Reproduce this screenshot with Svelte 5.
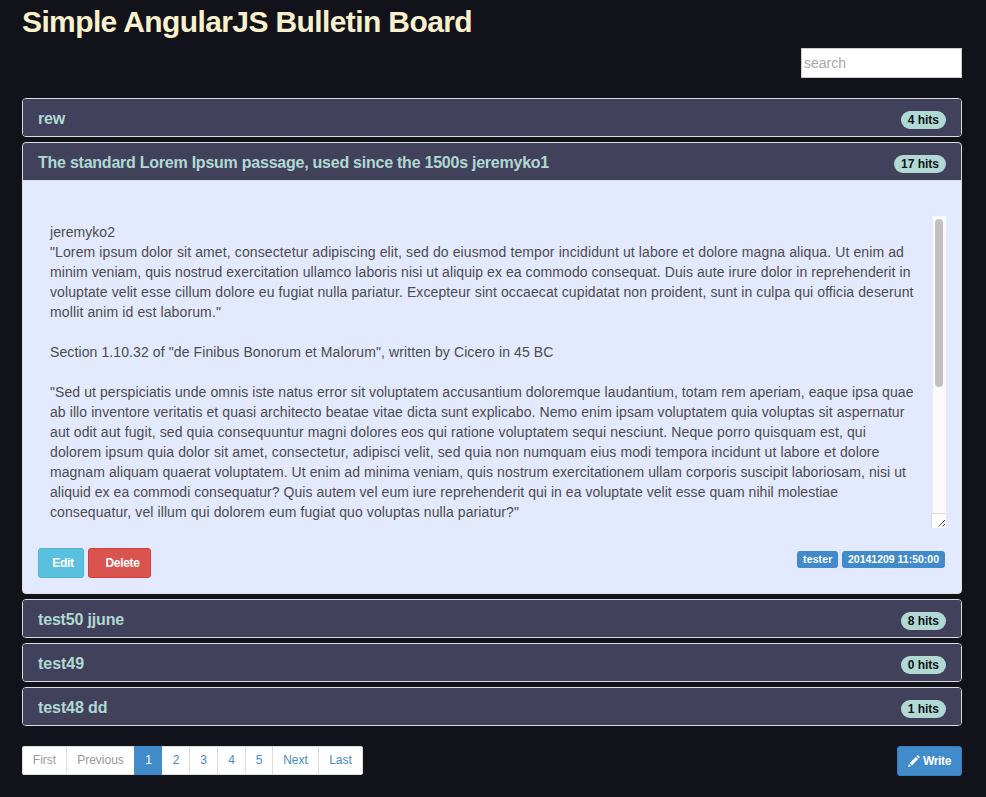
<script>
  const posts = [
    { title: 'rew', hits: 4, width: 27 },
    { title: 'The standard Lorem Ipsum passage, used since the 1500s jeremyko1', hits: 17, width: 511, open: true },
    { title: 'test50 jjune', hits: 8, width: 86 },
    { title: 'test49', hits: 0, width: 46 },
    { title: 'test48 dd', hits: 1, width: 69.5 }
  ];

  const lines = [
    ['jeremyko2', 65],
    ['"Lorem ipsum dolor sit amet, consectetur adipiscing elit, sed do eiusmod tempor incididunt ut labore et dolore magna aliqua. Ut enim ad', 854],
    ['minim veniam, quis nostrud exercitation ullamco laboris nisi ut aliquip ex ea commodo consequat. Duis aute irure dolor in reprehenderit in', 860.5],
    ['voluptate velit esse cillum dolore eu fugiat nulla pariatur. Excepteur sint occaecat cupidatat non proident, sunt in culpa qui officia deserunt', 863.5],
    ['mollit anim id est laborum."', 171],
    ['', 0],
    ['Section 1.10.32 of "de Finibus Bonorum et Malorum", written by Cicero in 45 BC', 503.5],
    ['', 0],
    ['"Sed ut perspiciatis unde omnis iste natus error sit voluptatem accusantium doloremque laudantium, totam rem aperiam, eaque ipsa quae', 863.5],
    ['ab illo inventore veritatis et quasi architecto beatae vitae dicta sunt explicabo. Nemo enim ipsam voluptatem quia voluptas sit aspernatur', 854.5],
    ['aut odit aut fugit, sed quia consequuntur magni dolores eos qui ratione voluptatem sequi nesciunt. Neque porro quisquam est, qui', 816],
    ['dolorem ipsum quia dolor sit amet, consectetur, adipisci velit, sed quia non numquam eius modi tempora incidunt ut labore et dolore', 829.5],
    ['magnam aliquam quaerat voluptatem. Ut enim ad minima veniam, quis nostrum exercitationem ullam corporis suscipit laboriosam, nisi ut', 856],
    ['aliquid ex ea commodi consequatur? Quis autem vel eum iure reprehenderit qui in ea voluptate velit esse quam nihil molestiae', 788],
    ['consequatur, vel illum qui dolorem eum fugiat quo voluptas nulla pariatur?"', 469]
  ];

  const pages = [
    { label: 'First', w: 44, off: true },
    { label: 'Previous', w: 68, off: true },
    { label: '1', w: 28, active: true },
    { label: '2', w: 27 },
    { label: '3', w: 28 },
    { label: '4', w: 28 },
    { label: '5', w: 27 },
    { label: 'Next', w: 46 },
    { label: 'Last', w: 45 }
  ];

  // Spreads the difference between natural and set width over the letters of a line.
  function fit(node, width) {
    if (!width) return;
    node.style.letterSpacing = '0';
    const natural = node.getBoundingClientRect().width;
    node.style.letterSpacing = (width - natural) / node.textContent.length + 'px';
  }
</script>

<main>
  <h1><span use:fit={450}>Simple AngularJS Bulletin Board</span></h1>
  <div class="search"><input placeholder="search" aria-label="search" /></div>

  <div class="group">
    {#each posts as post}
      <section class="panel">
        <header class:open={post.open}>
          <h4><span use:fit={post.width}>{post.title}</span></h4>
          <span class="badge">{post.hits} hits</span>
        </header>
        {#if post.open}
          <div class="body">
            <div class="content">
              <div class="text">
                {#each lines as [line, width]}
                  <div class="line"><span use:fit={width}>{line}</span></div>
                {/each}
              </div>
              <div class="scroll">
                <div class="track"><div class="thumb"></div></div>
                <div class="grip">
                  <svg width="14" height="14" viewBox="0 0 14 14" stroke="#555" stroke-width="1" fill="none">
                    <path d="M6.5 12.5 13 6M10.5 12.5 13 10" />
                  </svg>
                </div>
              </div>
            </div>
            <div class="actions">
              <button class="btn edit">Edit</button>
              <button class="btn delete">Delete</button>
              <span class="label user"><span use:fit={29.5}>tester</span></span>
              <span class="label date"><span use:fit={91}>20141209 11:50:00</span></span>
            </div>
          </div>
        {/if}
      </section>
    {/each}
  </div>

  <footer>
    <ul>
      {#each pages as page}
        <li class:off={page.off} class:active={page.active} style:width="{page.w}px">{page.label}</li>
      {/each}
    </ul>
    <button class="btn write">
      <svg width="12" height="12" viewBox="0 0 12 12" fill="#fff">
        <path d="M0 12 .9 8.9 3.1 11.1ZM1.6 8.1 7.9 1.9 10.1 4.1 3.9 10.4ZM8.6 1.2 9.3.5Q9.8 0 10.3.5L11.5 1.7Q12 2.2 11.5 2.7L10.8 3.4Z" />
      </svg>
      <span use:fit={28}>Write</span>
    </button>
  </footer>
</main>

<style>
  :global(body) {
    background: #11121a;
  }
  main {
    box-sizing: border-box;
    width: 986px;
    height: 797px;
    padding: 5px 24px 0 22px;
    overflow: hidden;
    font: 14px/20px 'Liberation Sans', Arial, sans-serif;
    color: #4c4c4c;
  }
  h1 {
    margin: 0;
    height: 43px;
    font-size: 30px;
    line-height: 33px;
    font-weight: 700;
    color: #f9f1cd;
    white-space: nowrap;
  }
  .search {
    display: flex;
    justify-content: flex-end;
  }
  input {
    box-sizing: border-box;
    width: 161px;
    height: 30px;
    padding: 1px 2px;
    border: 1px solid #ccc;
    font: inherit;
    background: #fff;
  }
  input::placeholder {
    color: #a9a9a9;
    letter-spacing: 0;
  }
  .group {
    display: flex;
    flex-direction: column;
    gap: 5px;
    margin-top: 20px;
  }
  .panel {
    border: 1px solid #ddd;
    border-radius: 4px;
    overflow: hidden;
    background: #e3e9ff;
  }
  header {
    display: flex;
    justify-content: space-between;
    height: 37px;
    padding: 0 15px;
    background: #41415c;
  }
  header.open {
    border-bottom: 1px solid #ddd;
  }
  h4 {
    margin: 0;
    font-size: 16px;
    line-height: 40px;
    height: 37px;
    color: #b0d9d3;
    white-space: nowrap;
  }
  .badge {
    height: 18px;
    margin-top: 12px;
    padding: 0 7px;
    border-radius: 10px;
    background: #b0d9d3;
    color: #11121a;
    font-size: 12px;
    font-weight: 700;
    line-height: 18px;
  }
  .body {
    height: 412px;
    box-sizing: border-box;
    padding: 35px 15px 0;
  }
  .content {
    display: flex;
    justify-content: space-between;
    height: 312px;
    padding-left: 12px;
  }
  .text {
    padding-top: 6px;
  }
  .line {
    height: 20px;
    white-space: pre;
  }
  .scroll {
    display: flex;
    flex-direction: column;
    align-items: flex-end;
    width: 15px;
  }
  .track {
    box-sizing: border-box;
    flex: 1;
    width: 14px;
    padding: 3px 0 0 2px;
    border-left: 1px solid #ececec;
    background: #fafafa;
  }
  .thumb {
    width: 8px;
    height: 168px;
    border-radius: 4px;
    background: #c1c1c1;
  }
  .grip {
    box-sizing: border-box;
    width: 15px;
    height: 15px;
    border: solid #dadada;
    border-width: 1px 0 0 1px;
    background: #fff;
  }
  .grip svg {
    display: block;
  }
  .actions {
    display: flex;
    align-items: flex-start;
    margin-top: 20px;
  }
  .btn {
    box-sizing: border-box;
    height: 30px;
    padding: 0;
    border: 1px solid;
    border-radius: 3px;
    font: 700 12px/18px 'Liberation Sans', Arial, sans-serif;
    letter-spacing: -0.3px;
    color: #fff;
  }
  .edit {
    width: 46px;
    padding-left: 4px;
    border-color: #46b8da;
    background: #5bc0de;
  }
  .delete {
    width: 63px;
    margin-left: 4px;
    padding-left: 6px;
    border-color: #d43f3a;
    background: #d9534f;
  }
  .label {
    box-sizing: border-box;
    height: 17px;
    margin-top: 3px;
    padding-left: 6px;
    border-radius: 3px;
    background: #428bca;
    color: #fff;
    font-size: 10.5px;
    font-weight: 700;
    line-height: 17px;
    white-space: nowrap;
  }
  .user {
    width: 41px;
    margin-left: auto;
  }
  .date {
    width: 103px;
    margin: 3px 1px 0 4px;
  }
  footer {
    display: flex;
    justify-content: space-between;
    margin-top: 20px;
  }
  ul {
    display: flex;
    height: 29px;
    margin: 0;
    padding: 0;
    border-radius: 3px;
    overflow: hidden;
    list-style: none;
  }
  li {
    box-sizing: border-box;
    border: solid #ddd;
    border-width: 1px 0 1px 1px;
    background: #fff;
    color: #428bca;
    font-size: 12px;
    line-height: 27px;
    text-align: center;
  }
  li:last-child {
    border-right-width: 1px;
  }
  li.off {
    color: #999;
  }
  li.active {
    border-color: #428bca;
    background: #428bca;
    color: #fff;
  }
  li.active + li {
    border-left-color: #fff;
  }
  .write {
    display: flex;
    align-items: center;
    gap: 3px;
    width: 65px;
    padding-left: 10px;
    border-color: #357ebd;
    background: #428bca;
  }
</style>
